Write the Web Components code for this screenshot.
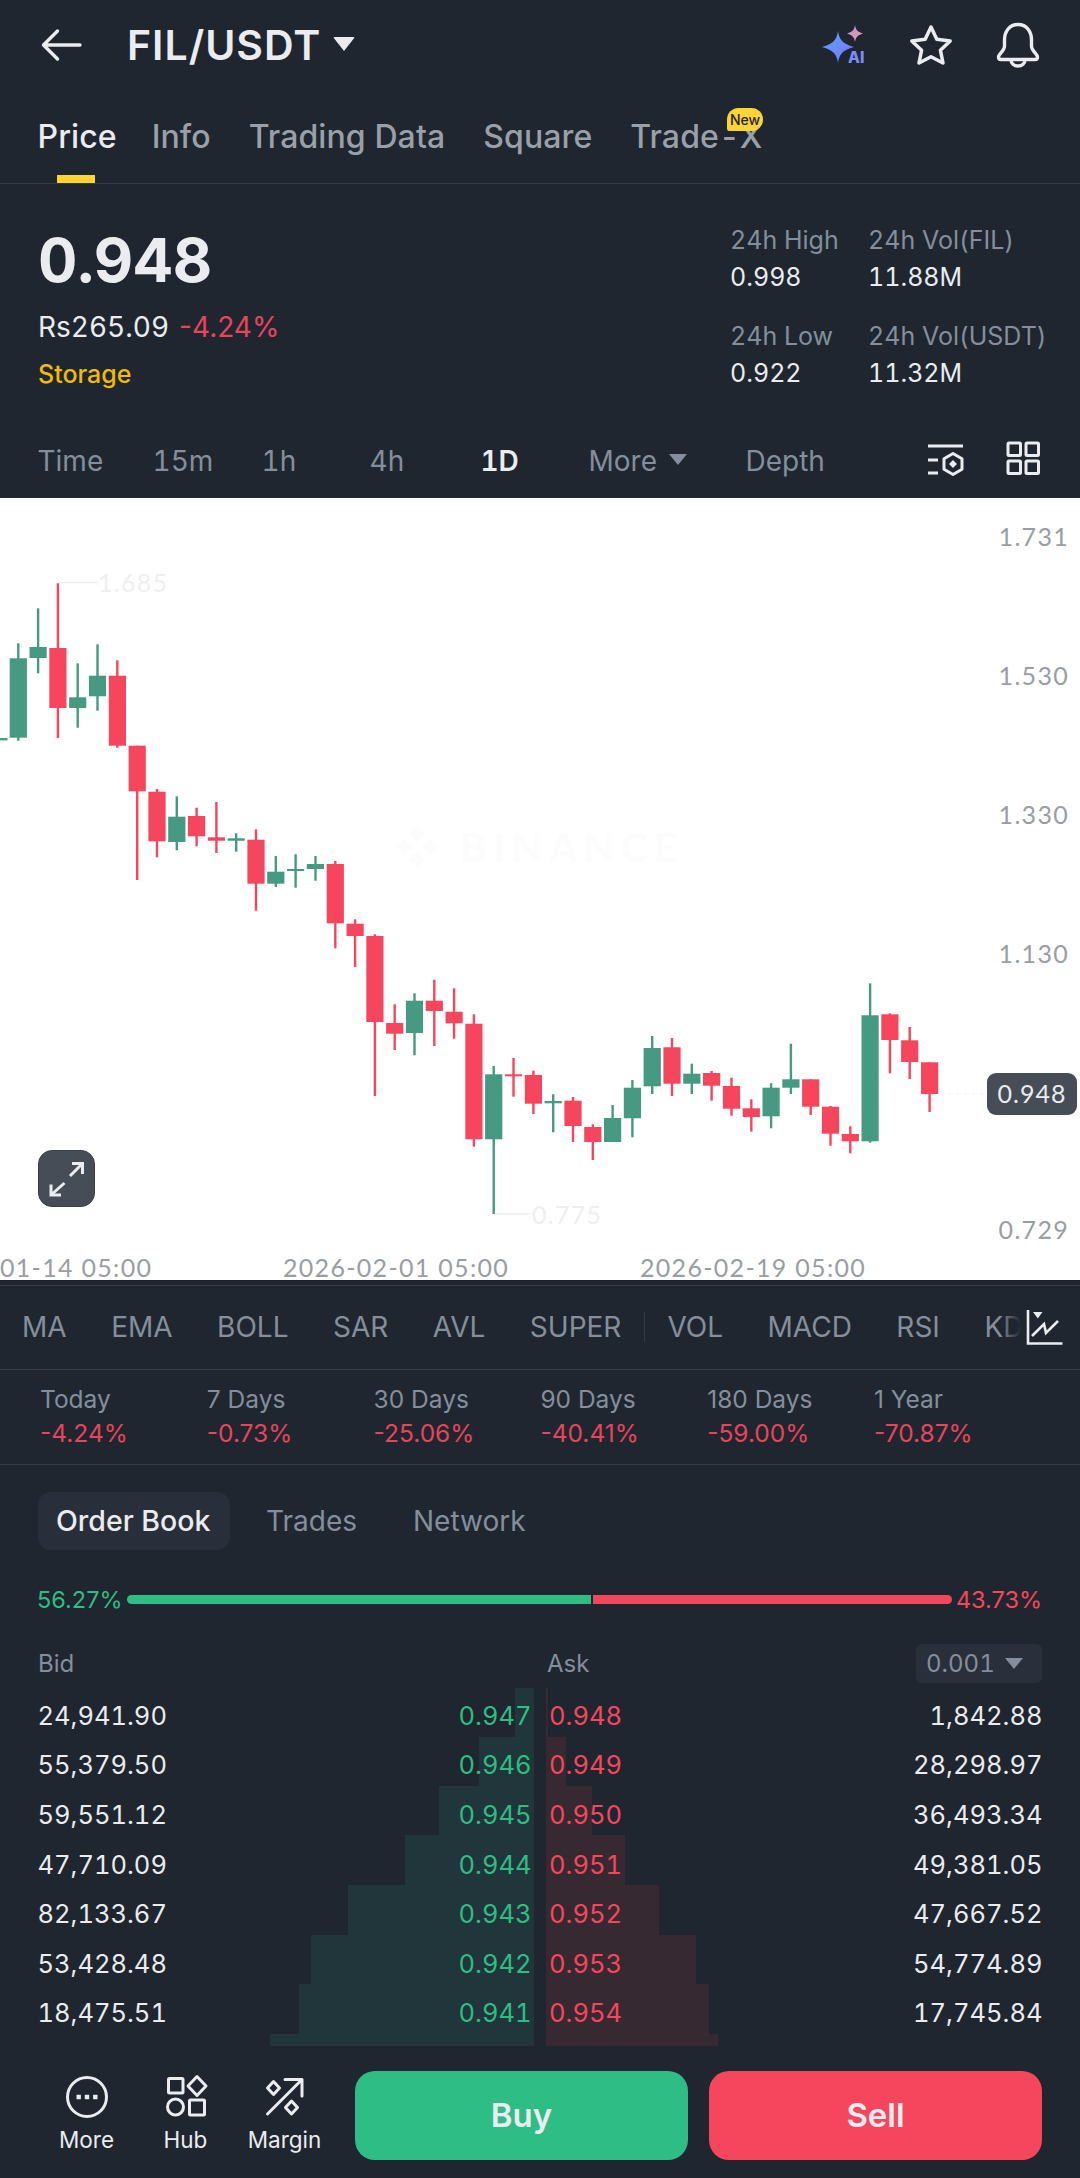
<!DOCTYPE html>
<html>
<head>
<meta charset="utf-8">
<title>FIL/USDT</title>
<style>
  html, body { margin: 0; padding: 0; background: #1f262f; }
  body { font-family: Inter, "Liberation Sans", sans-serif; font-variant-numeric: tabular-nums; color: #eaecef; width: 1080px; height: 2178px; overflow: hidden; }
</style>
</head>
<body>
<nav-bar></nav-bar>
<tab-bar></tab-bar>
<ticker-panel>
  <stat-cell label="24h High" value="0.998"></stat-cell>
  <stat-cell label="24h Vol(FIL)" value="11.88M"></stat-cell>
  <stat-cell label="24h Low" value="0.922"></stat-cell>
  <stat-cell label="24h Vol(USDT)" value="11.32M"></stat-cell>
</ticker-panel>
<interval-bar></interval-bar>
<price-chart></price-chart>
<indicator-bar></indicator-bar>
<period-strip>
  <stat-cell small label="Today" value="-4.24%"></stat-cell>
  <stat-cell small label="7 Days" value="-0.73%"></stat-cell>
  <stat-cell small label="30 Days" value="-25.06%"></stat-cell>
  <stat-cell small label="90 Days" value="-40.41%"></stat-cell>
  <stat-cell small label="180 Days" value="-59.00%"></stat-cell>
  <stat-cell small label="1 Year" value="-70.87%"></stat-cell>
</period-strip>
<order-book>
  <book-row bid="24,941.90" bp="0.947" ap="0.948" ask="1,842.88"></book-row>
  <book-row bid="55,379.50" bp="0.946" ap="0.949" ask="28,298.97"></book-row>
  <book-row bid="59,551.12" bp="0.945" ap="0.950" ask="36,493.34"></book-row>
  <book-row bid="47,710.09" bp="0.944" ap="0.951" ask="49,381.05"></book-row>
  <book-row bid="82,133.67" bp="0.943" ap="0.952" ask="47,667.52"></book-row>
  <book-row bid="53,428.48" bp="0.942" ap="0.953" ask="54,774.89"></book-row>
  <book-row bid="18,475.51" bp="0.941" ap="0.954" ask="17,745.84"></book-row>
</order-book>
<action-bar>
  <action-item label="More">
    <svg width="48" height="48" viewBox="0 0 48 48" fill="none" stroke="#eaecef" stroke-width="3"><circle cx="24" cy="24" r="19.5"/><path d="M13.5 21.7h4.4v4.6h-4.4zM21.8 21.7h4.4v4.6h-4.4zM30.1 21.7h4.4v4.6h-4.4z" fill="#eaecef" stroke="none"/></svg>
  </action-item>
  <action-item label="Hub">
    <svg width="48" height="48" viewBox="0 0 48 48" fill="none" stroke="#eaecef" stroke-width="3"><rect x="6.5" y="5.5" width="14.5" height="14.5" rx="1"/><path d="M35 3.5 44 13 35 22.5 26 13Z" stroke-linejoin="round"/><circle cx="13.5" cy="34" r="8"/><rect x="27.5" y="27" width="15" height="15" rx="1"/></svg>
  </action-item>
  <action-item label="Margin">
    <svg width="48" height="48" viewBox="0 0 48 48" fill="none" stroke="#eaecef" stroke-width="3" stroke-linecap="round" stroke-linejoin="round"><path d="M6.5 41 41 6.5M24 6.5H41V23"/><path d="M12.5 8.5 18.5 15 12.5 21.5 6.5 15ZM30.5 28 36.5 34.5 30.5 41 24.5 34.5Z"/></svg>
  </action-item>
  <trade-button slot="trade" kind="buy">Buy</trade-button>
  <trade-button slot="trade" kind="sell">Sell</trade-button>
</action-bar>

<script>
class Panel extends HTMLElement {
    connectedCallback() {
        if (!this.shadowRoot) {
            let shadowRoot = this.attachShadow({mode: 'open'});
            shadowRoot.innerHTML = this.template;
        }
    }
}

class NavBar extends Panel {
    get template() {
        return `
        <style>
            :host { display: flex; align-items: center; height: 90px; position: relative; }
            .back { margin-left: 40px; width: 44px; height: 44px; flex: none; }
            h1 { margin: 0 0 0 43px; font-size: 41px; line-height: 90px; font-weight: 600; letter-spacing: 1px; color: #eaecef; width: 206px; white-space: nowrap; }
            .caret { width: 0; height: 0; border-left: 11px solid transparent; border-right: 11px solid transparent; border-top: 14px solid #eaecef; border-radius: 2px; transform: translateY(-1px); }
            .icons { margin-left: auto; margin-right: 38px; display: flex; align-items: center; }
            .ai { width: 48px; height: 48px; margin-right: 39px; margin-top: 4px; }
            .star { width: 48px; height: 48px; margin-right: 39px; }
            .bell { width: 48px; height: 48px; }
            text { font-family: Inter, "Liberation Sans", sans-serif; font-weight: 800; font-size: 15.5px; }
        </style>
        <svg class="back" viewBox="0 0 44 44" fill="none" stroke="#eaecef" stroke-width="3.4" stroke-linecap="round" stroke-linejoin="round"><path d="M4 22H40M17.5 8 3.5 22 17.5 36"/></svg>
        <h1>FIL/USDT</h1>
        <div class="caret"></div>
        <div class="icons">
            <svg class="ai" viewBox="0 0 48 48">
                <defs>
                    <linearGradient id="a" x1="0" y1="0" x2="1" y2="1"><stop offset="0" stop-color="#5aa9ff"/><stop offset="1" stop-color="#7c6dfb"/></linearGradient>
                    <linearGradient id="b" x1="0" y1="0" x2="1" y2="1"><stop offset="0" stop-color="#b48cf5"/><stop offset="1" stop-color="#f0a08c"/></linearGradient>
                </defs>
                <path d="M18 8C19.5 17 22 20.5 34 24C22 27.5 19.5 31 18 40C16.5 31 14 27.5 2 24C14 20.5 16.5 17 18 8Z" fill="url(#a)"/>
                <path d="M35 2C36 7 37 8.5 43 10.5C37 12.5 36 14 35 19C34 14 33 12.5 27 10.5C33 8.5 34 7 35 2Z" fill="url(#b)"/>
                <text x="28" y="40" fill="#7f8cf8">AI</text>
            </svg>
            <svg class="star" viewBox="0 0 48 48" fill="none" stroke="#eaecef" stroke-width="3.5" stroke-linejoin="round"><path d="M24 6 29.8 18.3 43.2 20 33.4 29.2 36 42 24 35.7 12 42 14.6 29.2 4.8 20 18.2 18.3Z"/></svg>
            <svg class="bell" viewBox="0 0 48 48" fill="none" stroke="#eaecef" stroke-width="3.4" stroke-linejoin="round"><path d="M24 3.5C15 3.5 10.5 11 10.5 19V25C10.5 30 4.5 33 4.5 36C4.5 37.5 5.5 38.5 7 38.5H41C42.5 38.5 43.5 37.5 43.5 36C43.5 33 37.5 30 37.5 25V19C37.5 11 33 3.5 24 3.5Z"/><path d="M17 38.5C17 42.5 20 45 24 45C28 45 31 42.5 31 38.5"/></svg>
        </div>
        `;
    }
}

class TabBar extends Panel {
    get template() {
        return `
        <style>
            :host { display: flex; gap: 38px; padding: 0 0 0 37.5px; height: 93px; border-bottom: 1.5px solid #343b46; position: relative; }
            span { font-size: 32px; letter-spacing: .1px; line-height: 94px; color: #9aa0a9; font-weight: 500; height: 93px; position: relative; white-space: nowrap; }
            .on { color: #eaecef; font-weight: 500; margin-right: -3px; }
            .on::after { content: ""; position: absolute; left: 19px; width: 38px; top: 85px; height: 8px; background: #fcd535; }
            .new { position: absolute; left: 727px; top: 18px; width: 36px; height: 23px; border-radius: 12px 12px 12px 3px; background: #fcd535; color: #1e2329; font-size: 14px; line-height: 23px; text-align: center; font-weight: 500; }
        </style>
        <span class="on">Price</span><span>Info</span><span>Trading Data</span><span>Square</span><span>Trade-X</span>
        <div class="new">New</div>
        `;
    }
}

class StatCell extends Panel {
    get template() {
        let small = this.hasAttribute('small');
        return `
        <style>
            :host { display: block; ${small ? 'font-variant-numeric: normal;' : ''} }
            .l { font-size: ${small ? 24.5 : 25}px; line-height: 30px; color: #848e9c; white-space: nowrap; }
            .v { font-size: ${small ? 24.5 : 25}px; line-height: 30px; margin-top: ${small ? 4 : 7}px; color: ${small ? '#e5455d' : '#eaecef'}; white-space: nowrap; }
        </style>
        <div class="l">${this.getAttribute('label')}</div>
        <div class="v">${this.getAttribute('value')}</div>
        `;
    }
}

class TickerPanel extends Panel {
    get template() {
        return `
        <style>
            :host { display: flex; height: 240px; position: relative; }
            .main { padding: 44px 0 0 38px; width: 730px; box-sizing: border-box; }
            .price { font-size: 61px; line-height: 64px; font-weight: 700; color: #eaecef; }
            .sub { margin-top: 15px; font-size: 28px; line-height: 40px; display: flex; gap: 10px; }
            .chg { color: #e5455d; font-variant-numeric: normal; }
            .tag { margin-top: 12px; font-size: 25px; line-height: 30px; color: #f0b90b; font-weight: 500; }
            .grid { display: grid; grid-template-columns: 138px 200px; row-gap: 29px; padding-top: 41px; align-content: start; }
        </style>
        <div class="main">
            <div class="price">0.948</div>
            <div class="sub"><span>Rs265.09</span><span class="chg">-4.24%</span></div>
            <div class="tag">Storage</div>
        </div>
        <div class="grid"><slot></slot></div>
        `;
    }
}

class IntervalBar extends Panel {
    get template() {
        return `
        <style>
            :host { display: flex; align-items: center; height: 74px; padding-left: 37.5px; position: relative; box-sizing: border-box; }
            .row { display: grid; grid-template-columns: 115px 109px 108px 111px 108px 157px auto; font-size: 28px; color: #848e9c; line-height: 74px; }
            .on { color: #eaecef; font-weight: 600; }
            .more { display: flex; align-items: center; gap: 12px; }
            .more i { width: 0; height: 0; border-left: 9px solid transparent; border-right: 9px solid transparent; border-top: 11px solid #848e9c; margin-top: -4px; }
            .icons { position: absolute; left: 926px; top: 0; height: 74px; display: flex; gap: 41px; align-items: flex-start; }
            svg { display: block; margin-top: 19px; }
        </style>
        <div class="row"><span>Time</span><span>15m</span><span>1h</span><span>4h</span><span class="on">1D</span><span class="more">More<i></i></span><span>Depth</span></div>
        <div class="icons">
            <svg width="40" height="36" viewBox="0 0 40 36" fill="none" stroke="#eaecef" stroke-width="3"><path d="M2 3H37M2 17H12M2 30H12"/><path d="M27 10.5 36 15.7V26.3L27 31.5 18 26.3V15.7Z" stroke-linejoin="round"/><path d="M27 17 31 21 27 25 23 21Z" fill="#eaecef" stroke="none"/></svg>
            <svg width="34" height="34" viewBox="0 0 34 34" fill="none" stroke="#eaecef" stroke-width="3" style="margin-left:-1px;margin-top:17px"><rect x="2" y="2" width="12.5" height="12.5" rx="1"/><rect x="20" y="2" width="12.5" height="12.5" rx="1"/><rect x="2" y="20" width="12.5" height="12.5" rx="1"/><rect x="20" y="20" width="12.5" height="12.5" rx="1"/></svg>
        </div>
        `;
    }
}

// candles: [color, wick top, body top, body bottom, wick bottom], page y
const candles = [
    ['g',643.3,658.3,737.7,740.7],['g',608.3,647,658,673.3],['r',583.3,648,708,738],['g',663.3,697.3,708,727.7],
    ['g',644.3,675.7,696.3,710.7],['r',660.3,675.7,745.7,747.7],['r',745.7,745.7,791.3,880],['r',789,791.7,841.3,857.3],
    ['g',796.3,816.7,842,850.3],['r',807.7,816,836.3,846.3],['r',802,837.3,840.7,853],['g',833.3,838.3,840.7,851.7],
    ['r',829.3,839.7,883.7,910.7],['g',856,871.7,883.7,887],['g',854.3,869,871,887.7],['g',856,864,869,880.7],
    ['r',861,864,923.3,948.3],['r',919.3,923.7,936,967],['r',934.3,936,1022,1096],['r',1004.3,1023,1033.7,1050],
    ['g',993.3,1000.7,1033,1055.3],['r',979.7,1000.7,1011,1046],['r',988.3,1011.7,1023.3,1038.7],['r',1014.3,1023.7,1139.3,1146.7],
    ['g',1066,1074.3,1139.3,1214],['r',1058,1074.3,1076,1096.7],['r',1070.7,1075,1103.7,1114],['g',1094.3,1101,1103.3,1132.3],
    ['r',1097,1100.7,1126,1142],['r',1124.3,1127,1142,1160],['g',1105,1118,1142,1142],['g',1080,1087.7,1118.3,1137.3],
    ['g',1036,1048,1086.3,1094],['r',1038,1047.3,1083.7,1096],['g',1063.7,1073.7,1083.7,1094],['r',1071,1073,1085.7,1100.7],
    ['r',1077.7,1086,1108.7,1115.7],['r',1099.3,1108.3,1117,1131.7],['g',1083.3,1087.7,1116.3,1128.3],['g',1043.7,1079.3,1087.7,1094],
    ['r',1079.3,1079.3,1106.7,1115],['r',1106,1106.7,1133.7,1145.7],['r',1126.3,1134,1141.3,1153.3],['g',983.3,1015.3,1141.3,1142.7],
    ['r',1013.3,1014.3,1040,1073.3],['r',1027,1040.3,1062,1079],['r',1062.3,1062.3,1094,1112]
];

class PriceChart extends Panel {
    get candleMarkup() {
        let fill = {g: '#459a81', r: '#f6465d'};
        let out = `<rect x="-8" y="738" width="15.5" height="2.4" fill="${fill.g}"/>`;
        candles.forEach((c, i) => {
            let x = 18.3 + i * 19.81;
            out += `<rect x="${(x - 1.2).toFixed(1)}" y="${c[1]}" width="2.4" height="${(c[4] - c[1]).toFixed(1)}" fill="${fill[c[0]]}"/>`;
            out += `<rect x="${(x - 8.6).toFixed(1)}" y="${c[2]}" width="17.2" height="${Math.max(c[3] - c[2], 2).toFixed(1)}" fill="${fill[c[0]]}"/>`;
        });
        return out;
    }

    get template() {
        return `
        <style>
            :host { display: block; height: 782px; background: #fff; position: relative; font-family: Lato, "Liberation Sans", sans-serif; }
            svg.c { position: absolute; left: 0; top: 0; width: 1080px; height: 782px; }
            .t { position: absolute; font-size: 25px; line-height: 24px; letter-spacing: 1.3px; color: #9a9ea3; white-space: nowrap; transform: translateY(-50%); }
            .axis { right: 11px; }
            .faint { color: #eeeff1; }
            .wm { position: absolute; left: 394px; top: 326px; display: flex; align-items: center; gap: 20px; color: #fcfcfc; font-size: 41px; font-weight: 700; letter-spacing: 6px; line-height: 44px; }
            .badge { position: absolute; left: 987px; top: 575px; width: 90px; height: 42px; border-radius: 9px; background: #474d57; color: #eaecef; font-size: 25px; letter-spacing: 1px; line-height: 41px; text-align: center; }
            .expand { position: absolute; left: 38px; top: 652px; width: 57px; height: 57px; box-sizing: border-box; border-radius: 14px; background: #474d57; border: 1px solid #3a3f48; }
        </style>
        <div class="wm"><svg width="46" height="46" viewBox="0 0 46 46" fill="#fcfcfc"><path d="M23 2 31 10 23 18 15 10ZM10 15 18 23 10 31 2 23ZM36 15 44 23 36 31 28 23ZM23 28 31 36 23 44 15 36Z"/></svg>BINANCE</div>
        <svg class="c" viewBox="0 498 1080 782">
            <path d="M58 582.5H97M494 1214H530" stroke="#eceef0" stroke-width="1.5" fill="none"/>
            <path d="M940 1094H987" stroke="#f0f1f2" stroke-width="1" stroke-dasharray="5 3" fill="none"/>
            ${this.candleMarkup}
        </svg>
        <span class="t faint" style="left:98px;top:84px">1.685</span>
        <span class="t faint" style="left:532px;top:716px">0.775</span>
        <span class="t axis" style="top:37.7px">1.731</span>
        <span class="t axis" style="top:176.7px">1.530</span>
        <span class="t axis" style="top:316px">1.330</span>
        <span class="t axis" style="top:455px">1.130</span>
        <span class="t axis" style="top:731px">0.729</span>
        <span class="t" style="left:0;top:769px">01-14 05:00</span>
        <span class="t" style="left:283px;top:769px">2026-02-01 05:00</span>
        <span class="t" style="left:640px;top:769px">2026-02-19 05:00</span>
        <div class="badge">0.948</div>
        <div class="expand">
            <svg width="55" height="55" viewBox="0 0 55 55" fill="none" stroke="#eaecef" stroke-width="3" style="display:block"><path d="M31 25 43.5 12.5M33 12.5H43.5V23M25.5 32 12 44M12 33.5V44H22"/></svg>
        </div>
        `;
    }
}

class IndicatorBar extends Panel {
    get template() {
        return `
        <style>
            :host { display: block; height: 84.5px; margin-top: 5px; border-top: 1.5px solid #343b46; border-bottom: 1.5px solid #343b46; box-sizing: border-box; position: relative; overflow: hidden; }
            .row { display: flex; align-items: center; height: 81.5px; padding-left: 22px; gap: 44.5px; font-size: 28px; color: #848e9c; white-space: nowrap; }
            .sep { width: 1px; height: 30px; background: #343b46; margin: 0 -22px 0 -22px; }
            .fade { position: absolute; right: 0; top: 0; width: 80px; height: 81.5px; background: linear-gradient(90deg, rgba(31,38,47,0) 0, #1f262f 26%); display: flex; align-items: center; justify-content: flex-end; }
            svg { display: block; margin-right: 17px; }
        </style>
        <div class="row"><span>MA</span><span>EMA</span><span>BOLL</span><span>SAR</span><span>AVL</span><span>SUPER</span><i class="sep"></i><span>VOL</span><span>MACD</span><span>RSI</span><span>KDJ</span></div>
        <div class="fade">
            <svg width="37" height="36" viewBox="0 0 37 36" fill="none" stroke="#eaecef" stroke-width="2.6"><path d="M2 1V34.5H36.5"/><path d="M6 27 18 15 20 24 32 12"/><path d="M7 3H16.5L11.8 9.5Z" fill="#eaecef" stroke="none"/></svg>
        </div>
        `;
    }
}

class PeriodStrip extends Panel {
    get template() {
        return `
        <style>
            :host { display: block; height: 95px; border-bottom: 1.5px solid #343b46; box-sizing: border-box; }
            .grid { display: grid; grid-template-columns: repeat(6, 166.8px); padding: 14.5px 0 0 40px; }
        </style>
        <div class="grid"><slot></slot></div>
        `;
    }
}

class BookRow extends Panel {
    get template() {
        return `
        <style>
            :host { display: flex; height: 49.6px; align-items: center; font-size: 25.5px; position: relative; }
            .bid { width: 240px; padding-left: 37.5px; color: #eaecef; }
            .bp { width: 254px; text-align: right; color: #2ebd85; }
            .ap { margin-left: 17.5px; width: 80px; color: #f6465d; }
            .ask { margin-left: auto; padding-right: 37.5px; color: #eaecef; }
        </style>
        <span class="bid">${this.getAttribute('bid')}</span>
        <span class="bp">${this.getAttribute('bp')}</span>
        <span class="ap">${this.getAttribute('ap')}</span>
        <span class="ask">${this.getAttribute('ask')}</span>
        `;
    }
}

class OrderBook extends Panel {
    bars(widths, side) {
        return widths.map(w => `<div class="${side}" style="width:${w[0]}px;height:${w[1]}px"></div>`).join('');
    }

    get template() {
        let green = [[19,49],[55,49],[95,49.5],[129,50],[186,50],[223,49],[235,50],[264,12]];
        let red = [[2,49],[20,49],[46,49.5],[79,50],[113,50],[150,49],[163,50],[172,12]];
        return `
        <style>
            :host { display: block; height: 586px; position: relative; }
            .depth { position: absolute; left: 0; top: 223px; width: 1080px; display: flex; gap: 12px; }
            .depth > div { display: flex; flex-direction: column; }
            .lside { width: 534px; align-items: flex-end; }
            .g { background: #21363a; }
            .r { background: #372931; }
            .tabs { display: flex; padding: 27px 0 0 38px; font-size: 28px; color: #848e9c; height: 58px; align-items: center; }
            .tabs span { line-height: 58px; white-space: nowrap; }
            .tabs .on { color: #eaecef; font-size: 28.5px; font-weight: 500; background: #292f3a; border-radius: 13px; padding: 0 18px; width: 192px; box-sizing: border-box; margin-right: 36px; }
            .tabs .n { margin-left: 56px; }
            .ratio { display: flex; align-items: center; margin: 35px 38px 0 37px; height: 30px; font-size: 23.5px; font-variant-numeric: normal; }
            .ratio span { width: 90px; }
            .ratio .a { color: #2ebd85; }
            .ratio .b { color: #f6465d; text-align: right; }
            .bar { display: flex; flex: 1; height: 9px; gap: 2px; }
            .bar i { display: block; height: 9px; }
            .bar .x { width: 464px; background: #2ebd85; border-radius: 5px 0 0 5px; }
            .bar .y { flex: 1; background: #f0475e; border-radius: 0 5px 5px 0; }
            .head { display: flex; align-items: center; margin: 29px 38px 0; height: 39px; font-size: 24px; color: #848e9c; }
            .head .bid { width: 509px; }
            .pick { margin-left: auto; width: 126px; height: 39px; border-radius: 6px; background: #2a303b; display: flex; align-items: center; padding-left: 10px; gap: 10px; box-sizing: border-box; }
            .pick i { width: 0; height: 0; border-left: 9px solid transparent; border-right: 9px solid transparent; border-top: 11px solid #848e9c; }
            .rows { margin-top: 8px; position: relative; }
        </style>
        <div class="depth">
            <div class="lside">${this.bars(green, 'g')}</div>
            <div>${this.bars(red, 'r')}</div>
        </div>
        <div class="tabs"><span class="on">Order Book</span><span>Trades</span><span class="n">Network</span></div>
        <div class="ratio"><span class="a">56.27%</span><div class="bar"><i class="x"></i><i class="y"></i></div><span class="b">43.73%</span></div>
        <div class="head"><span class="bid">Bid</span><span>Ask</span><div class="pick">0.001<i></i></div></div>
        <div class="rows"><slot></slot></div>
        `;
    }
}

class ActionItem extends Panel {
    get template() {
        return `
        <style>
            :host { display: flex; flex-direction: column; align-items: center; width: 99px; padding-top: 22px; box-sizing: border-box; }
            .icon { height: 48px; }
            ::slotted(svg) { display: block; }
            .l { font-size: 22.5px; line-height: 30px; margin-top: 4px; color: #eaecef; white-space: nowrap; }
        </style>
        <div class="icon"><slot></slot></div>
        <div class="l">${this.getAttribute('label')}</div>
        `;
    }
}

class TradeButton extends Panel {
    get template() {
        let color = this.getAttribute('kind') === 'buy' ? '#2ebd85' : '#f6465d';
        return `
        <style>
            :host { display: flex; align-items: center; justify-content: center; height: 89px; border-radius: 20px; background: ${color}; color: #eaecef; font-size: 33px; font-weight: 600; flex: 1; }
        </style>
        <slot></slot>
        `;
    }
}

class ActionBar extends Panel {
    get template() {
        return `
        <style>
            :host { display: flex; height: 128px; padding-left: 37px; padding-right: 38px; box-sizing: border-box; }
            .left { display: flex; width: 318px; flex: none; }
            .right { display: flex; flex: 1; gap: 21px; padding-top: 20px; height: 89px; }
        </style>
        <div class="left"><slot></slot></div>
        <div class="right"><slot name="trade"></slot></div>
        `;
    }
}

customElements.define('nav-bar', NavBar);
customElements.define('tab-bar', TabBar);
customElements.define('stat-cell', StatCell);
customElements.define('ticker-panel', TickerPanel);
customElements.define('interval-bar', IntervalBar);
customElements.define('price-chart', PriceChart);
customElements.define('indicator-bar', IndicatorBar);
customElements.define('period-strip', PeriodStrip);
customElements.define('book-row', BookRow);
customElements.define('order-book', OrderBook);
customElements.define('action-item', ActionItem);
customElements.define('trade-button', TradeButton);
customElements.define('action-bar', ActionBar);
</script>
</body>
</html>
